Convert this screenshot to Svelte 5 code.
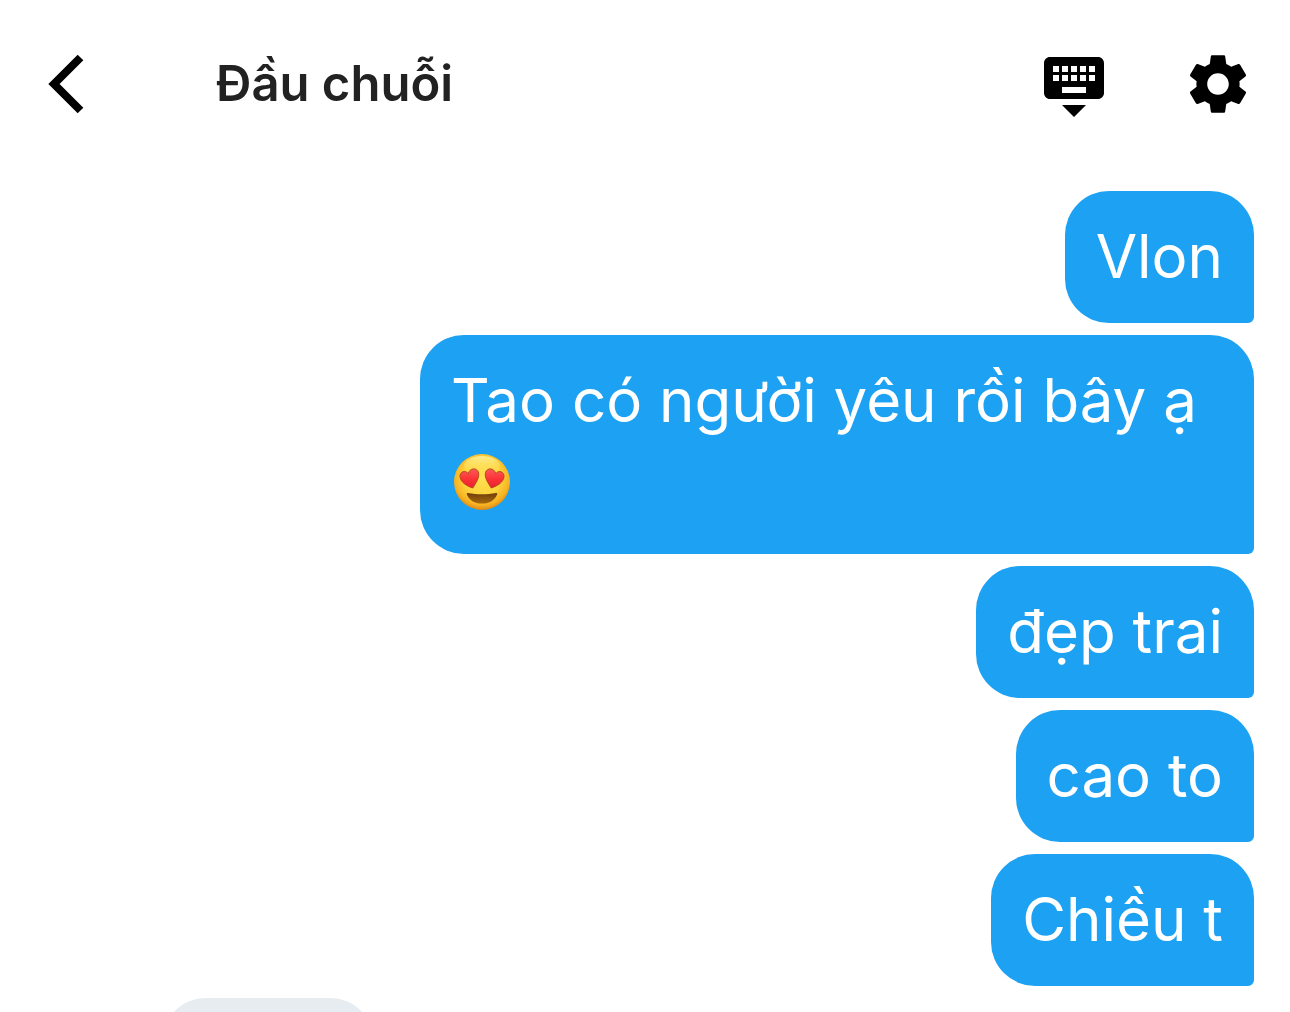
<script>
  const messages = [
    { text: 'Vlon' },
    { text: 'Tao có người yêu rồi bây ạ', emoji: true },
    { text: 'đẹp trai' },
    { text: 'cao to' },
    { text: 'Chiều t' }
  ];
</script>

<div class="chat">
  <header>
    <button class="icon" aria-label="Back">
      <svg viewBox="0 0 72 72"><path d="M44.500 9.500 18 36l26.500 26.500" fill="none" stroke="#000" stroke-width="8" /></svg>
    </button>
    <h1>Đầu chuỗi</h1>
    <div class="actions">
      <button class="icon" aria-label="Hide keyboard">
        <svg viewBox="0 0 24 24"><path d="M20 3H4c-1.1 0-2 .9-2 2v10c0 1.1.9 2 2 2h16c1.1 0 2-.9 2-2V5c0-1.1-.9-2-2-2zM11 6h2v2h-2V6zm0 3h2v2h-2V9zM8 6h2v2H8V6zm0 3h2v2H8V9zM7 11H5V9h2v2zm0-3H5V6h2v2zm9 7H8v-2h8v2zm0-4h-2V9h2v2zm0-3h-2V6h2v2zm3 3h-2V9h2v2zm0-3h-2V6h2v2zM12 23l4-4H8l4 4z" /></svg>
      </button>
      <button class="icon" aria-label="Settings">
        <svg viewBox="0 0 24 24"><path d="M19.14 12.94c.04-.3.06-.61.06-.94 0-.32-.02-.64-.07-.94l2.03-1.58c.18-.14.23-.41.12-.61l-1.92-3.32c-.12-.22-.37-.29-.59-.22l-2.39.96c-.5-.38-1.03-.7-1.62-.94l-.36-2.54c-.04-.24-.24-.41-.48-.41h-3.84c-.24 0-.43.17-.47.41l-.36 2.54c-.59.24-1.13.57-1.62.94l-2.39-.96c-.22-.08-.47 0-.59.22L2.74 8.87c-.12.21-.08.47.12.61l2.03 1.58c-.05.3-.09.63-.09.94s.02.64.07.94l-2.03 1.58c-.18.14-.23.41-.12.61l1.92 3.32c.12.22.37.29.59.22l2.39-.96c.5.38 1.03.7 1.62.94l.36 2.54c.05.24.24.41.48.41h3.84c.24 0 .44-.17.47-.41l.36-2.54c.59-.24 1.13-.56 1.62-.94l2.39.96c.22.08.47 0 .59-.22l1.92-3.32c.12-.22.07-.47-.12-.61l-2.01-1.58zM12 15.6c-1.98 0-3.6-1.62-3.6-3.6s1.62-3.6 3.6-3.6 3.6 1.62 3.6 3.6-1.62 3.6-3.6 3.6z" /></svg>
      </button>
    </div>
  </header>

  <main>
    {#each messages as message}
      <div class="bubble sent">
        {message.text}
        {#if message.emoji}
          <svg class="emoji" viewBox="0 0 56 56" role="img" aria-label="Smiling face with heart eyes">
            <defs>
              <radialGradient id="face" cx="50%" cy="42%" r="60%">
                <stop offset="0" stop-color="#ffe052" />
                <stop offset="0.55" stop-color="#fdd33c" />
                <stop offset="0.82" stop-color="#f7b322" />
                <stop offset="1" stop-color="#d97d12" />
              </radialGradient>
              <linearGradient id="shine" x1="0" y1="0" x2="0" y2="1">
                <stop offset="0" stop-color="#fff9b0" stop-opacity="0.7" />
                <stop offset="1" stop-color="#ffe052" stop-opacity="0" />
              </linearGradient>
              <linearGradient id="heart" x1="0" y1="0" x2="0" y2="1">
                <stop offset="0" stop-color="#ff5a58" />
                <stop offset="0.5" stop-color="#fb3438" />
                <stop offset="1" stop-color="#e9212d" />
              </linearGradient>
              <linearGradient id="mouth" x1="0" y1="0" x2="0" y2="1">
                <stop offset="0" stop-color="#713d0c" />
                <stop offset="1" stop-color="#a5690d" />
              </linearGradient>
            </defs>
            <circle cx="28" cy="28" r="28" fill="url(#face)" />
            <ellipse cx="28" cy="12" rx="18" ry="10" fill="url(#shine)" />
            <path d="M14 39c9 1.800 19 1.800 28 0 1-.2 1.500.4 1.100 1.400C41 46 35.500 49.500 28 49.500S15 46 12.900 40.400c-.4-1 .1-1.600 1.100-1.400z" fill="url(#mouth)" />
            <path d="M18.700 34C13 32 6.500 28.500 6 22.500c-.3-5 5.700-6.800 8.300-2.700 1-5.800 8.700-6.800 10.200-1.200 1.200 5-2.800 10.900-5.800 15.400z" fill="url(#heart)" stroke="#b9421c" stroke-width="1" />
            <path d="M37.300 34C43 32 49.500 28.500 50 22.500c.3-5-5.700-6.800-8.300-2.700-1-5.800-8.700-6.800-10.200-1.200-1.200 5 2.800 10.900 5.800 15.400z" fill="url(#heart)" stroke="#b9421c" stroke-width="1" />
          </svg>
        {/if}
      </div>
    {/each}
    <div class="bubble received"></div>
  </main>
</div>

<style>
  :global(body) {
    margin: 0;
    background: #fff;
  }

  .chat {
    height: 100vh;
    overflow: hidden;
    font-family: Inter, 'Liberation Sans', sans-serif;
  }

  header {
    display: flex;
    align-items: center;
    padding: 48px 36px;
  }

  .icon {
    display: block;
    padding: 0;
    border: 0;
    background: none;
    cursor: pointer;
  }

  .icon svg {
    display: block;
    width: 72px;
    height: 72px;
  }

  h1 {
    flex: 1;
    margin: 0 0 0 108px;
    color: #222;
    font-size: 49px;
    font-weight: 600;
    line-height: 72px;
  }

  .actions {
    display: flex;
    gap: 72px;
  }

  main {
    display: flex;
    flex-direction: column;
    align-items: flex-end;
    gap: 12px;
    padding: 23px 36px 36px;
  }

  .bubble {
    box-sizing: border-box;
    min-height: 132px;
    padding: 29px 31px 31px;
    border-radius: 44px 44px 6px 44px;
    font-size: 60px;
    line-height: 72px;
  }

  .sent {
    max-width: 834px;
    background: #1da1f2;
    color: #fff;
  }

  .received {
    align-self: flex-start;
    width: 212px;
    margin-left: 126px;
    border-radius: 44px 44px 44px 6px;
    background: #e6ecf0;
  }

  .emoji {
    width: 56px;
    height: 56px;
    margin: 18px 3px 13px;
    vertical-align: top;
  }
</style>
